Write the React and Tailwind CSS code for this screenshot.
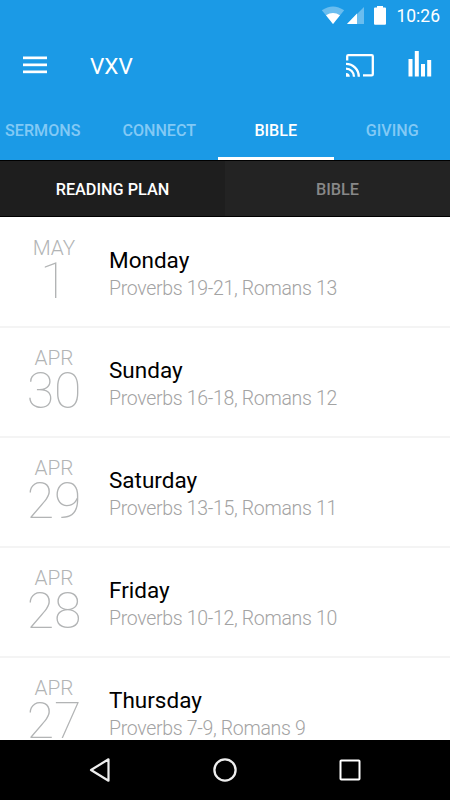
const tabs = ["SERMONS", "CONNECT", "BIBLE", "GIVING"];

const readings = [
  { month: "MAY", date: "1", day: "Monday", text: "Proverbs 19-21, Romans 13" },
  { month: "APR", date: "30", day: "Sunday", text: "Proverbs 16-18, Romans 12" },
  { month: "APR", date: "29", day: "Saturday", text: "Proverbs 13-15, Romans 11" },
  { month: "APR", date: "28", day: "Friday", text: "Proverbs 10-12, Romans 10" },
  { month: "APR", date: "27", day: "Thursday", text: "Proverbs 7-9, Romans 9" },
];

function StatusBar() {
  return (
    <div className="flex h-[30px] items-center justify-end pr-[10px] text-white">
      {/* wifi */}
      <svg width="24" height="19" viewBox="0 0 24 19" className="mr-[1px]">
        <path d="M12 18 L0.8 4.2 Q12 -3.4 23.2 4.2 Z" fill="#fff" opacity="0.35" />
        <path d="M12 18 L5 9.2 Q12 4.8 19 9.2 Z" fill="#fff" />
      </svg>
      {/* signal */}
      <svg width="19" height="19" viewBox="0 0 19 19" className="mr-[8px]">
        <path d="M18 1 V18 H1 Z" fill="#fff" opacity="0.35" />
        <path d="M11 7.6 V18 H1 Z" fill="#fff" />
      </svg>
      {/* battery */}
      <svg width="14" height="20" viewBox="0 0 14 20" className="mr-[9px]">
        <path d="M4 1 H10 V2.5 H12 Q13 2.5 13 3.5 V18.7 Q13 19.7 12 19.7 H2 Q1 19.7 1 18.7 V3.5 Q1 2.5 2 2.5 H4 Z" fill="#fff" />
      </svg>
      <span className="pt-[4px] text-[17.5px] leading-none">10:26</span>
    </div>
  );
}

function Toolbar() {
  return (
    <div className="flex h-[70px] items-center pl-[23px] pr-[18px] text-white">
      <svg width="24" height="18" viewBox="0 0 24 18" fill="#fff">
        <rect y="0.5" width="24" height="2.7" />
        <rect y="7.5" width="24" height="2.7" />
        <rect y="14.5" width="24" height="2.7" />
      </svg>
      <h1 className="ml-[43px] flex-1 pt-[2px] text-[22.5px] leading-none">VXV</h1>
      {/* cast */}
      <svg width="28" height="23" viewBox="0 0 28 23" fill="none" stroke="#fff" strokeWidth="2.3">
        <path d="M1.2 6.5 V2.3 Q1.2 1.2 2.3 1.2 H25.7 Q26.8 1.2 26.8 2.3 V20.2 Q26.8 21.3 25.7 21.3 H17" />
        <path d="M0 9.9 A12.8 12.8 0 0 1 12.8 22.7" />
        <path d="M0 14.7 A8 8 0 0 1 8 22.7" />
        <path d="M0 18.9 A3.8 3.8 0 0 1 3.8 22.7 H0 Z" fill="#fff" stroke="none" />
      </svg>
      {/* equalizer */}
      <svg width="24" height="26" viewBox="0 0 24 26" fill="#fff" className="-mt-[2px] ml-[34px]">
        <rect x="0.5" y="8" width="4" height="17.5" />
        <rect x="6.8" y="0" width="4" height="25.5" />
        <rect x="13" y="13" width="4" height="12.5" />
        <rect x="19.2" y="9" width="4" height="16.5" />
      </svg>
    </div>
  );
}

function Tabs() {
  return (
    <div className="-ml-[15.5px] flex h-[60px]">
      {tabs.map((tab) => (
        <div
          key={tab}
          className={`${
            tab === "BIBLE"
              ? "border-white text-white"
              : "border-transparent text-[#82c9f5]"
          } flex w-[116.5px] shrink-0 items-center justify-center border-b-[3px] pt-[6px] text-[16.1px] leading-none font-medium`}
        >
          {tab}
        </div>
      ))}
    </div>
  );
}

function ReadingRow({ month, date, day, text }) {
  return (
    <div className="flex h-[110px] shrink-0 border-b-2 border-[#f4f4f4]">
      <div className="ml-[24px] w-[60px] pt-[20px] text-center text-[#b2b4b5]">
        <div className="text-[20.75px] leading-[20px] font-light">{month}</div>
        <div className="text-[50px] leading-[46px] font-thin">{date}</div>
      </div>
      <div className="ml-[25px] pt-[28px]">
        <h2 className="text-[22.5px] leading-[28px] text-black">{day}</h2>
        <p className="pt-[2px] text-[19.5px] leading-[26px] font-light tracking-[-0.32px] text-[#a3a3a3]">{text}</p>
      </div>
    </div>
  );
}

function NavBar() {
  return (
    <div className="flex h-[60px] shrink-0 items-center justify-center gap-[101px] bg-black">
      <svg width="24" height="26" viewBox="0 0 24 26" fill="none" stroke="#eee" strokeWidth="2.2">
        <path d="M20.5 2.3 V23.7 L3 13 Z" strokeLinejoin="round" />
      </svg>
      <svg width="24" height="24" viewBox="0 0 24 24" fill="none" stroke="#eee" strokeWidth="2.3">
        <circle cx="12" cy="12" r="10.6" />
      </svg>
      <svg width="24" height="24" viewBox="0 0 24 24" fill="none" stroke="#fff" strokeWidth="2">
        <rect x="2.5" y="2.5" width="19" height="19" rx="0.8" />
      </svg>
    </div>
  );
}

export default function App() {
  return (
    <div className="flex h-[800px] w-[450px] flex-col overflow-hidden bg-white font-['Roboto',sans-serif]">
      <header className="shrink-0 overflow-hidden bg-[#1b9ae6]">
        <StatusBar />
        <Toolbar />
        <Tabs />
      </header>

      <div className="flex h-[57px] shrink-0 border-y border-black text-[16.25px] font-medium">
        <div className="flex flex-1 items-center justify-center bg-[#1e1e1e] pt-[4px] text-white">
          READING PLAN
        </div>
        <div className="flex flex-1 items-center justify-center bg-[#232323] pt-[4px] text-[#888]">
          BIBLE
        </div>
      </div>

      <div className="flex min-h-0 flex-1 flex-col overflow-hidden pt-px">
        {readings.map((r) => (
          <ReadingRow key={r.date} {...r} />
        ))}
      </div>

      <NavBar />
    </div>
  );
}
